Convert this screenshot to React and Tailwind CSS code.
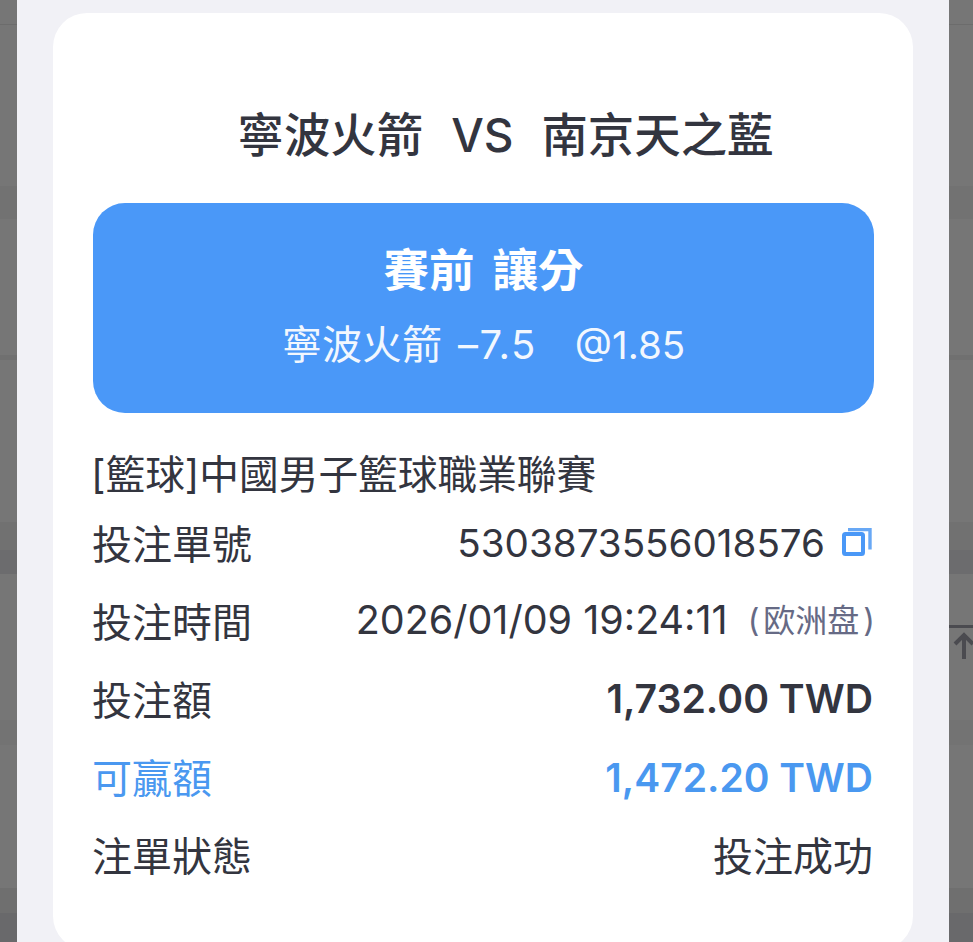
import React from 'react';

const cjk = '[font-family:Inter,"Noto_Sans_CJK_TC",sans-serif]';

// the dimmed page that shows on both sides of the sheet
const bands = [
  { h: 'h-[24px]', bg: 'bg-[#767676]' },
  { h: 'h-[1px]', bg: 'bg-[#6c6c6c]' },
  { h: 'h-[161px]', bg: 'bg-[#767676]' },
  { h: 'h-[33px]', bg: 'bg-[#727272]' },
  { h: 'h-[136px]', bg: 'bg-[#767676]' },
  { h: 'h-[5px]', bg: 'bg-[#707070]' },
  { h: 'h-[162px]', bg: 'bg-[#767676]' },
  { h: 'h-[28px]', bg: 'bg-[#717171]' },
  { h: 'h-[24px]', bg: 'bg-[#6c6c6e]' },
  { h: 'h-[146px]', bg: 'bg-[#767676]' },
  { h: 'h-[25px]', bg: 'bg-[#737373]' },
  { h: 'h-[143px]', bg: 'bg-[#767676]' },
  { h: 'h-[25px]', bg: 'bg-[#6f6f6f]' },
  { h: 'h-[29px]', bg: 'bg-[#69696b]' },
];

function SideStrip({ className, children }) {
  return (
    <div className={`relative shrink-0 flex flex-col overflow-hidden ${className}`}>
      {bands.map((b, i) => (
        <div key={i} className={`shrink-0 ${b.h} ${b.bg}`} />
      ))}
      {children}
    </div>
  );
}

function CopyIcon() {
  return (
    <svg width="30" height="30" viewBox="0 0 30 30" fill="none" className="ml-[17px] mr-[1px]">
      <path d="M6 1.5h22v20" stroke="#68a8f5" strokeWidth="3.4" />
      <rect x="2" y="6" width="19" height="20" rx="1.5" stroke="#4a98f7" strokeWidth="4" />
    </svg>
  );
}

function Row({ label, labelClass = 'text-[#33353f]', children }) {
  return (
    <div className="flex h-[78px] items-center justify-between">
      <span className={`-ml-px pt-[4px] text-[40px] leading-none ${labelClass}`}>{label}</span>
      <div className="flex items-center">{children}</div>
    </div>
  );
}

export default function App() {
  return (
    <div className={`flex h-[942px] w-[973px] overflow-hidden ${cjk}`}>
      <SideStrip className="w-[17px]" />

      <div className="flex-1 overflow-hidden bg-[#f1f1f6] pl-[36px] pr-[36px] pt-[13px]">
        <div className="h-[937px] rounded-[34px] bg-white px-[40px]">
          <h1 className="flex h-[190px] items-center justify-center pt-[54px] pl-[45px] text-[46.4px] leading-none font-medium whitespace-nowrap text-[#33353f]">
            <span>寧波火箭</span>
            <span className="mx-[28px] text-[46px]">VS</span>
            <span>南京天之藍</span>
          </h1>

          <div className="-mr-px flex h-[210px] flex-col items-center rounded-[32px] bg-[#4a98f8] pt-[41px] text-white">
            <div className="flex gap-[18px] text-[45.5px] leading-[54px] font-bold whitespace-nowrap">
              <span>賽前</span>
              <span>讓分</span>
            </div>
            <div className="mt-[23px] flex text-[40px] leading-[48px] whitespace-nowrap text-[#f2f7fe]">
              <span>寧波火箭</span>
              <span className="ml-[16px] tracking-[1.5px]">–7.5</span>
              <span className="ml-[38px] text-[38.5px]">@1.85</span>
            </div>
          </div>

          <div className="mt-[38px] -ml-[2px] flex h-[50px] items-center text-[39.7px] leading-none whitespace-nowrap text-[#33353f]">
            [籃球]中國男子籃球職業聯賽
          </div>

          <div className="mt-[3px]">
            <Row label="投注單號">
              <span className="text-[38.6px] leading-none text-[#33353f]">5303873556018576</span>
              <CopyIcon />
            </Row>
            <Row label="投注時間">
              <span className="text-[39.5px] leading-none text-[#33353f]">2026/01/09 19:24:11</span>
              <span className="-mr-[2px] ml-[20px] flex text-[32px] leading-none whitespace-nowrap text-[#666a85]">
                <span>(</span>
                <span className="mx-[4px]">欧洲盘</span>
                <span>)</span>
              </span>
            </Row>
            <Row label="投注額">
              <span className="text-[39.2px] leading-none font-semibold text-[#33353f]">1,732.00 TWD</span>
            </Row>
            <Row label="可贏額" labelClass="text-[#4a98f0]">
              <span className="text-[39px] leading-none font-semibold text-[#4a98f0]">1,472.20 TWD</span>
            </Row>
            <Row label="注單狀態">
              <span className="pt-[4px] text-[40px] leading-none text-[#33353f]">投注成功</span>
            </Row>
          </div>
        </div>
      </div>

      <SideStrip className="w-[24px]">
        <div className="absolute top-[625px] left-0 h-[3px] w-full bg-[#4b4b50]" />
        <svg className="absolute top-[632px] left-[4px]" width="20" height="30" viewBox="0 0 20 30" fill="none">
          <path d="M11 27V3M2 12l9-9 9 9" stroke="#4b4b50" strokeWidth="4" />
        </svg>
      </SideStrip>
    </div>
  );
}
